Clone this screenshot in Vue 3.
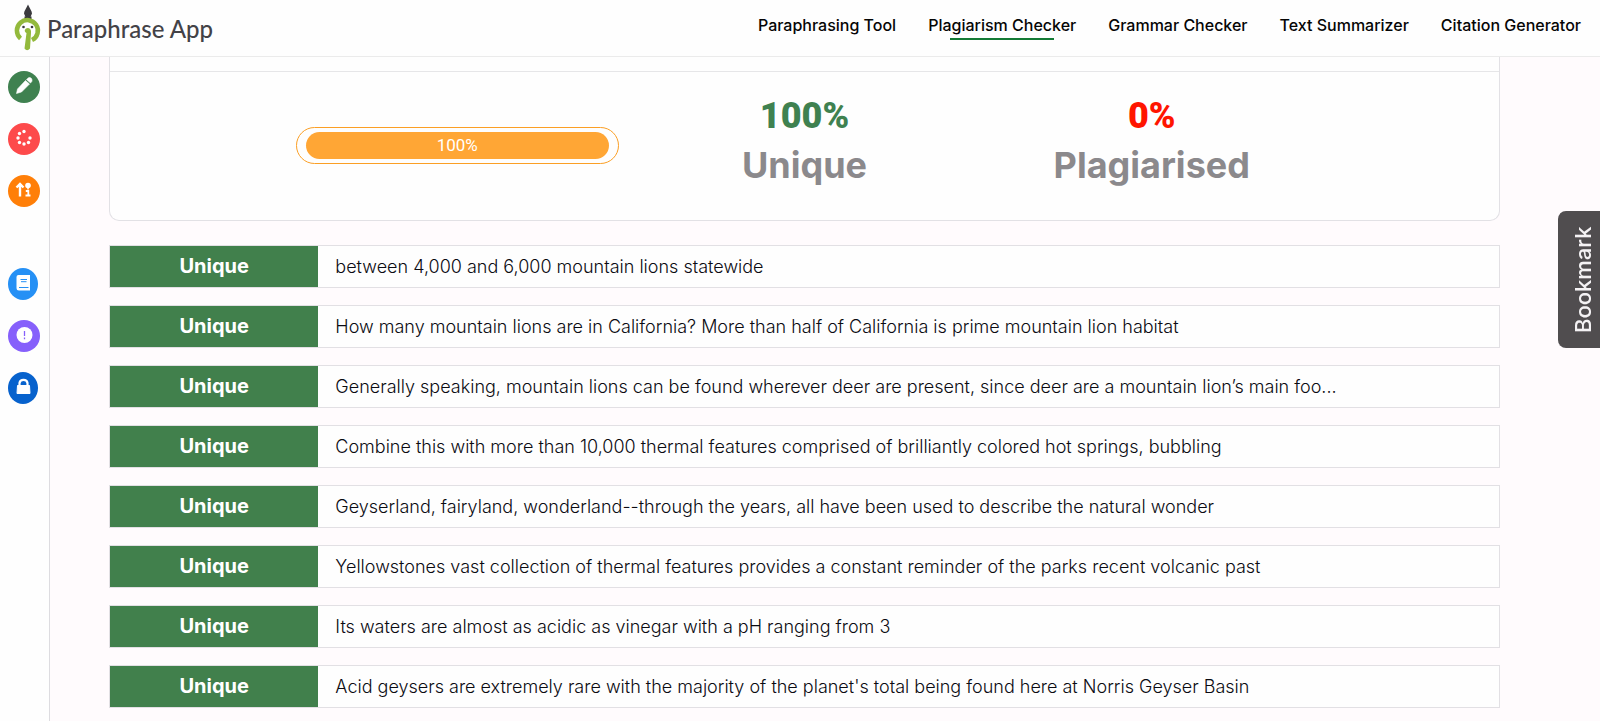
<script setup>
const links = ['Paraphrasing Tool', 'Plagiarism Checker', 'Grammar Checker', 'Text Summarizer', 'Citation Generator']
const active = 'Plagiarism Checker'
const progress = 100
const results = [
  'between 4,000 and 6,000 mountain lions statewide',
  'How many mountain lions are in California? More than half of California is prime mountain lion habitat',
  'Generally speaking, mountain lions can be found wherever deer are present, since deer are a mountain lion’s main foo...',
  'Combine this with more than 10,000 thermal features comprised of brilliantly colored hot springs, bubbling',
  'Geyserland, fairyland, wonderland--through the years, all have been used to describe the natural wonder',
  'Yellowstones vast collection of thermal features provides a constant reminder of the parks recent volcanic past',
  'Its waters are almost as acidic as vinegar with a pH ranging from 3',
  "Acid geysers are extremely rare with the majority of the planet's total being found here at Norris Geyser Basin",
]
</script>

<template>
  <div class="page">
    <header class="header">
      <a class="logo" href="#">
        <svg width="28" height="48" viewBox="0 0 28 48" aria-hidden="true">
          <path d="M14 0.500 C15.500 4 18 7 18 9.500 L16.500 13 H11.500 L10 9.500 C10 7 12.500 4 14 .5Z" fill="#3b3a3e" />
          <path d="M10.500 12.500h7v2.500h-7z" fill="#3b3a3e" />
          <path d="M6.500 34.500 A10.500 10.500 0 1 1 18 36" fill="none" stroke="#93b93c" stroke-width="4.500" />
          <path d="M7 25 Q8 19 14 21 Q20 19 21 25 L20 30 Q14 34 8 30Z" fill="#fff" />
          <circle cx="9.500" cy="23" r="1.300" fill="#3b3a3e" />
          <circle cx="18" cy="23" r="1.300" fill="#3b3a3e" />
          <path d="M14 24 C10 24.500 10 28 12.500 29 L10.500 44.500 Q13 48 16 44.500 L17 29 Q17.500 24.500 14 24Z" fill="#93b93c" />
        </svg>
        <span>Paraphrase App</span>
      </a>
      <nav class="nav">
        <a v-for="l in links" :key="l" href="#" :class="{ active: l === active }">{{ l }}</a>
      </nav>
    </header>

    <div class="body">
      <aside class="sidebar">
        <button class="tool green" aria-label="Paraphrase">
          <svg width="32" height="32" viewBox="0 0 32 32"><path d="M8.500 22.500 L9.500 18 L17.500 9.500 L21.500 13 L13.500 21Z M18.500 8.500 L20.500 6.800 Q22 6 23.500 7.500 Q24.500 9 23.800 10.500 L22.500 12Z" fill="#fff" stroke="#fff" stroke-width=".6" stroke-linejoin="round" /></svg>
        </button>
        <button class="tool red" aria-label="Plagiarism">
          <svg width="32" height="32" viewBox="0 0 32 32" fill="#fff"><circle cx="16" cy="8.500" r="1.700" /><circle cx="11.500" cy="10.500" r="1.700" /><circle cx="10" cy="15" r="1.700" /><circle cx="11.500" cy="19.500" r="1.700" /><circle cx="16" cy="21" r="1.700" /><circle cx="20.500" cy="19.500" r="1.700" /><circle cx="22" cy="15" r="1.700" /></svg>
        </button>
        <button class="tool orange" aria-label="Grammar">
          <svg width="32" height="32" viewBox="0 0 32 32" fill="none" stroke="#fff" stroke-width="2.400"><path d="M12 21.500V9.500 M8.500 12.500 L12 9 L15.500 12.500" /><circle cx="20" cy="10.500" r="2.800" fill="#fff" stroke="none" /><path d="M20 12.500V14.500" stroke-width="1.500" /><path d="M17.800 16H20.300V20.500 M17.500 20.500H22.500" stroke-width="1.800" /></svg>
        </button>
        <button class="tool blue apart" aria-label="Summarizer">
          <svg width="30" height="32" viewBox="0 0 30 32"><path d="M10.500 7H22V22.500H11Q8.500 22.500 8.500 20V9Q8.500 7 10.500 7Z" fill="#fff" /><path d="M12.500 11.500H19 M13 13.700H18.500 M11 19.500H20.500" stroke="#2590f5" stroke-width="1" /></svg>
        </button>
        <button class="tool purple" aria-label="Help">
          <svg width="32" height="32" viewBox="0 0 32 32"><circle cx="16.500" cy="15" r="8" fill="#fff" /><path d="M16.500 11V16 M16.500 17.500V19.200" stroke="#8660fb" stroke-width="1.300" /></svg>
        </button>
        <button class="tool navy" aria-label="Log in">
          <svg width="30" height="32" viewBox="0 0 30 32"><path d="M11.500 14V11Q12 7.800 15.500 7.800 Q19 7.800 19.500 11V14" fill="none" stroke="#fff" stroke-width="2.200" /><path d="M9.500 13.500H21.500L22 21.500H9Z" fill="#fff" stroke="#fff" stroke-linejoin="round" /></svg>
        </button>
      </aside>

      <main class="main">
        <section class="summary">
          <div class="strip"></div>
          <div class="stats">
            <div class="track" role="progressbar" :aria-valuenow="progress">
              <div class="bar" :style="{ width: progress + '%' }">{{ progress }}%</div>
            </div>
            <div class="stat"><strong class="good">100%</strong><span>Unique</span></div>
            <div class="stat"><strong class="bad">0%</strong><span>Plagiarised</span></div>
          </div>
        </section>
        <ul class="results">
          <li v-for="r in results" :key="r">
            <span class="tag">Unique</span>
            <span class="sentence">{{ r }}</span>
          </li>
        </ul>
      </main>
    </div>

    <button class="bookmark">Bookmark</button>
  </div>
</template>

<style>
body { background: #fffbfd; }
</style>

<style scoped>
.page {
  min-height: 100vh;
  display: flex;
  flex-direction: column;
  box-sizing: border-box;
  font-family: Inter, "Open Sans", sans-serif;
  color: #0b0b12;
}
.header {
  height: 56px;
  display: flex;
  align-items: center;
  justify-content: space-between;
  padding: 0 19px 0 14px;
  background: #fefefe;
  border-bottom: 1px solid #ebebeb;
}
.logo {
  display: flex;
  align-items: center;
  gap: 5px;
  color: #434247;
  font-family: Lato, sans-serif;
  font-size: 24px;
  font-weight: 500;
  text-decoration: none;
}
.nav { display: flex; gap: 32px; padding-bottom: 6px; }
.nav a {
  position: relative;
  color: #050505;
  font-size: 16px;
  font-weight: 500;
  line-height: 24px;
  text-decoration: none;
  white-space: nowrap;
}
.nav a.active::after {
  content: "";
  position: absolute;
  left: 15%;
  right: 15%;
  bottom: -3px;
  height: 2px;
  background: #147a35;
}
.body { flex: 1; display: flex; }
.sidebar {
  flex: none;
  width: 41px;
  padding: 14px 0 0 8px;
  display: flex;
  flex-direction: column;
  gap: 20px;
  background: #fefefe;
  border-right: 1px solid #dddce0;
}
.tool {
  width: 32px;
  height: 32px;
  padding: 0;
  border: 0;
  border-radius: 50%;
  overflow: hidden;
}
.tool svg { display: block; }
.green { background: #3f8150; }
.red { background: #fd4a4b; }
.orange { background: #ff7f08; }
.blue { width: 30px; background: #2590f5; }
.purple { background: #8660fb; }
.navy { width: 30px; background: #0762cd; }
.apart { margin-top: 41px; }
.main { flex: 1; min-width: 0; padding: 0 100px 12px 59px; }
.summary {
  border: 1px solid #e2e1e5;
  border-top: 0;
  border-radius: 0 0 10px 10px;
  background: #fefefe;
}
.strip { height: 14px; border-bottom: 1px solid #e6e6e8; }
.stats {
  width: 75%;
  margin: 0 auto;
  padding: 20px 0 30px;
  display: grid;
  grid-template-columns: repeat(3, 1fr);
  align-items: center;
}
.track {
  margin: 8px 12px 0;
  padding: 4px 9px;
  border: 1px solid #fb9f25;
  border-radius: 19px;
}
.bar {
  border-radius: 14px;
  background: #ffa635;
  color: #fff;
  font-family: Roboto, sans-serif;
  font-size: 17px;
  line-height: 27px;
  text-align: center;
}
.stat {
  display: flex;
  flex-direction: column;
  align-items: center;
  font-size: 36px;
  line-height: 49px;
  font-weight: 700;
}
.stat strong { font-family: Roboto, sans-serif; }
.stat span { color: #8b898c; }
.good { color: #3f8150; }
.bad { color: #ff1500; }
.results {
  list-style: none;
  margin: 24px 0 0;
  padding: 0;
  display: flex;
  flex-direction: column;
  gap: 17px;
}
.results li {
  display: flex;
  background: #fefefe;
  border: 1px solid #e2e0e4;
  line-height: 41px;
}
.tag {
  flex: none;
  width: 15%;
  background: #41804c;
  color: #fff;
  font-size: 20px;
  font-weight: 700;
  text-align: center;
}
.sentence {
  padding: 0 17px;
  font-size: 18px;
  font-weight: 300;
  white-space: nowrap;
  overflow: hidden;
  text-overflow: ellipsis;
}
.bookmark {
  position: fixed;
  right: 0;
  top: 211px;
  width: 42px;
  height: 137px;
  padding: 0 8px 0 0;
  border: 0;
  border-radius: 0 8px 8px 0;
  background: #504d4f;
  color: #f4f2f4;
  font-family: inherit;
  font-size: 22px;
  font-weight: 500;
  line-height: 34px;
  writing-mode: vertical-rl;
  transform: rotate(180deg);
}
</style>
